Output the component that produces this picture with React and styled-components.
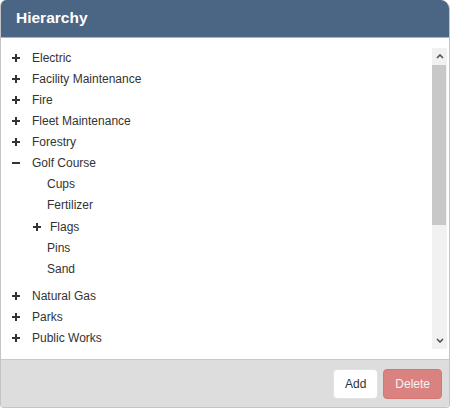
import React from 'react'
import styled, { createGlobalStyle } from 'styled-components'

const GlobalStyle = createGlobalStyle`
  body {
    margin: 0;
    font-family: "Liberation Sans", Arial, sans-serif;
    background: #ffffff;
  }
`

const Panel = styled.div`
  width: 450px;
  height: 408px;
  box-sizing: border-box;
  display: flex;
  flex-direction: column;
  border: 1px solid #c4c4c4;
  border-top: none;
  border-radius: 6px 9px 4px 4px;
  overflow: hidden;
  background: #ffffff;
`

const Header = styled.div`
  height: 38px;
  flex: none;
  box-sizing: border-box;
  padding: 10px 0 0 15px;
  background: #4b6584;
  border-bottom: 1px solid #a9b4c0;
  color: #ffffff;
  font-weight: bold;
  font-size: 15.5px;
  line-height: 16px;
`

const Body = styled.div`
  flex: 1;
  min-height: 0;
  display: flex;
  padding: 10px 2px 10px 0;
`

const ListArea = styled.div`
  flex: 1;
  overflow: hidden;
  padding-top: 2px;
`

const ScrollBar = styled.div`
  flex: none;
  width: 15px;
  display: flex;
  flex-direction: column;
  background: #f1f1f1;
`

const Arrow = styled.div`
  height: 17px;
  display: flex;
  align-items: center;
  justify-content: center;
  background: #f1f1f1;
`

const Track = styled.div`
  flex: 1;
`

const Thumb = styled.div`
  height: 160px;
  margin: 0 1px 0 0;
  background: #c8c8c8;
`

const Tree = styled.ul`
  list-style: none;
  margin: 0;
  padding: 0;
`

const Group = styled.ul`
  list-style: none;
  margin: 0 0 6px;
  padding: 0;
`

const Row = styled.li`
  display: flex;
  align-items: flex-start;
  padding-left: ${(p) => p.$indent}px;
  margin-top: ${(p) => (p.$bump ? 1 : 0)}px;
  padding-bottom: 4px;
  font-size: 12px;
  line-height: 17px;
  color: #333333;
  white-space: nowrap;
`

const Toggle = styled.span`
  flex: none;
  width: ${(p) => p.$w}px;
  display: flex;
  padding-top: 4px;
  cursor: pointer;
`

const Footer = styled.div`
  flex: none;
  height: 48px;
  display: flex;
  align-items: center;
  justify-content: flex-end;
  gap: 5px;
  padding: 1px 7px 0 0;
  box-sizing: border-box;
  background: #dddddd;
  border-top: 1px solid #c8c8c8;
`

const Button = styled.button`
  height: 30px;
  padding: 0 11px;
  border-radius: 4px;
  font-family: "Liberation Sans", Arial, sans-serif;
  font-size: 12px;
  border: 1px solid ${(p) => (p.$danger ? '#d43f3a' : '#e2e2e2')};
  background: ${(p) => (p.$danger ? '#d9534f' : '#ffffff')};
  color: ${(p) => (p.$danger ? '#ffffff' : '#333333')};
  opacity: ${(p) => (p.disabled ? 0.65 : 1)};
`

const Plus = () => (
  <svg width="8" height="8" viewBox="0 0 8 8">
    <rect x="3" y="0" width="2" height="8" fill="#333" />
    <rect x="0" y="3" width="8" height="2" fill="#333" />
  </svg>
)

const Minus = () => (
  <svg width="8" height="8" viewBox="0 0 8 8">
    <rect x="0" y="3" width="8" height="2" fill="#333" />
  </svg>
)

const Chevron = ({ down }) => (
  <svg width="8" height="5" viewBox="0 0 8 5">
    <path
      d={down ? 'M1 1 L4 4 L7 1' : 'M1 4 L4 1 L7 4'}
      fill="none"
      stroke="#505050"
      strokeWidth="1.6"
    />
  </svg>
)

const before = ['Electric', 'Facility Maintenance', 'Fire', 'Fleet Maintenance', 'Forestry']
const after = ['Natural Gas', 'Parks', 'Public Works']

const Node = ({ label }) => (
  <Row $indent={11}>
    <Toggle $w={20}>
      <Plus />
    </Toggle>
    {label}
  </Row>
)

const App = () => (
  <>
    <GlobalStyle />
    <Panel>
      <Header>Hierarchy</Header>
      <Body>
        <ListArea>
          <Tree>
            {before.map((l) => (
              <Node key={l} label={l} />
            ))}
            <Row $indent={11}>
              <Toggle $w={20}>
                <Minus />
              </Toggle>
              Golf Course
            </Row>
            <li>
              <Group>
                <Row $indent={46}>Cups</Row>
                <Row $indent={46}>Fertilizer</Row>
                <Row $indent={32} $bump>
                  <Toggle $w={17}>
                    <Plus />
                  </Toggle>
                  Flags
                </Row>
                <Row $indent={46}>Pins</Row>
                <Row $indent={46}>Sand</Row>
              </Group>
            </li>
            {after.map((l) => (
              <Node key={l} label={l} />
            ))}
          </Tree>
        </ListArea>
        <ScrollBar>
          <Arrow>
            <Chevron />
          </Arrow>
          <Track>
            <Thumb />
          </Track>
          <Arrow>
            <Chevron down />
          </Arrow>
        </ScrollBar>
      </Body>
      <Footer>
        <Button>Add</Button>
        <Button $danger disabled>
          Delete
        </Button>
      </Footer>
    </Panel>
  </>
)

export default App
